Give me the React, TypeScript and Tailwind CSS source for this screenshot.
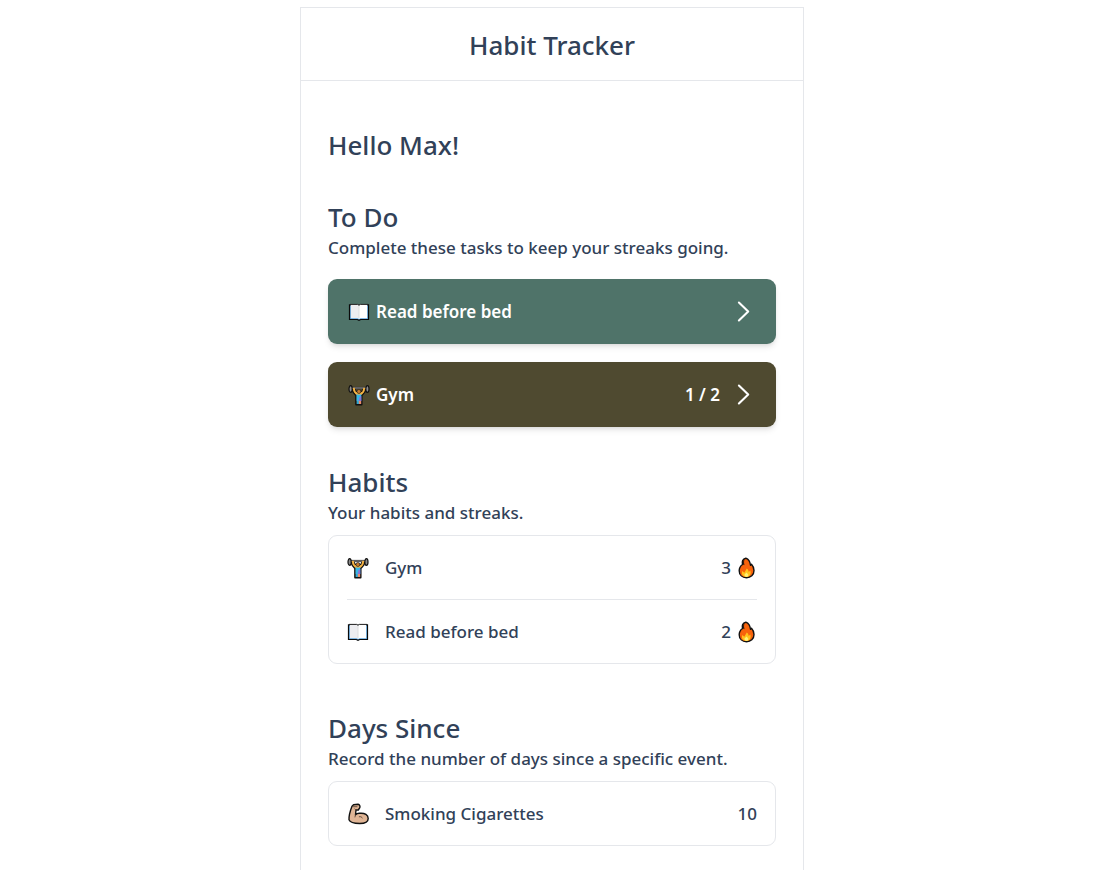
import type { ReactNode } from "react";

function BookIcon() {
  return (
    <svg viewBox="0 0 22 22" className="size-[22px] shrink-0" aria-hidden="true">
      <path d="M1.500 3.800H9.600L11 4.500 12.400 3.800H20.500V18.500H12.700L11 19.300 9.300 18.500H1.500Z" fill="#5aa5e0" stroke="#0a0a0a" strokeWidth="1.200" />
      <path d="M2.800 3.200H9.500L11 4.200V17.900L9.500 17.300H2.800Z" fill="#ededf0" />
      <path d="M19.200 3.200H12.500L11 4.200V17.900L12.500 17.300H19.200Z" fill="#fff" />
      <path d="M2 3.400H9.600L11 4.300 12.400 3.400H20" fill="none" stroke="#222" strokeWidth="1" />
      <path d="M11 4.800V17" stroke="#dadada" strokeWidth=".9" />
    </svg>
  );
}

function LifterIcon() {
  return (
    <svg viewBox="0 0 22 22" className="size-[22px] shrink-0" aria-hidden="true">
      <path d="M4 5L5.200 8 8 11.500V20.600H13.700V11.500L16.700 8 17.900 5 15.300 4.800 14.200 7.500H7.800L6.700 4.800Z" fill="#f5b342" stroke="#111" strokeWidth="1.700" strokeLinejoin="round" />
      <path d="M3 4H19" stroke="#222" strokeWidth="2.200" />
      <path d="M3 4H19" stroke="#aaa" strokeWidth=".9" />
      <circle cx="10.900" cy="7.500" r="2" fill="#c87a2c" stroke="#222" strokeWidth=".7" />
      <ellipse cx="2.600" cy="5" rx="1.600" ry="3.300" fill="#8c8c8c" stroke="#111" strokeWidth="1.200" />
      <ellipse cx="19.400" cy="5" rx="1.600" ry="3.300" fill="#8c8c8c" stroke="#111" strokeWidth="1.200" />
      <path d="M4.700 4L6.700 3.800 7.500 7.200 9.300 9.200 8.300 10.900 5.800 8ZM17.300 4L15.300 3.800 14.500 7.200 12.500 9.200 13.500 10.900 16.200 8Z" fill="#f5b342" />
      <path d="M8.500 10.200L11 10.800 13.300 10.200V17H8.500Z" fill="#35b8e8" />
      <path d="M11.500 13L13.300 12V17H10.500Z" fill="#8c73d2" />
      <path d="M10.800 17H13.200V20H10.800Z" fill="#e88b6c" />
      <path d="M8.700 17H10.800V20H8.700Z" fill="#2aa7d8" />
    </svg>
  );
}

function FlameIcon() {
  return (
    <svg viewBox="0 0 22 22" className="size-[22px] shrink-0" aria-hidden="true">
      <path d="M10.800 1.200C7.500 1.800 6.800 5 7.500 7.500 5.300 9 4.200 11 4.200 13.700 4.200 18 7.300 20.700 11.500 20.700S19 18 19 13.500C19 10.500 17.900 8.700 16.500 7.200L15.500 8.300C15.200 5.300 13.900 2.300 10.800 1.200Z" fill="#f7630c" stroke="#111" strokeWidth="1.400" strokeLinejoin="round" />
      <path d="M9 3.500C8.300 5 8.700 6.500 9.200 7.800L8 7C7.700 5.500 8.200 4.300 9 3.500Z" fill="#111" stroke="#111" strokeWidth=".5" />
      <path d="M7.300 14L9.300 15.700 11.800 11.500C13.200 12.500 13.500 13.700 13.700 15L15.300 13.500C16.500 17 14.800 19.900 11.500 19.900S6.100 17.500 7.300 14Z" fill="#ffc21c" />
      <path d="M9.500 17.500L11.600 15.500 13.300 17.700C13.300 19.200 12.600 19.900 11.500 19.900S9.400 18.900 9.500 17.500Z" fill="#fff176" />
    </svg>
  );
}

function BicepsIcon() {
  return (
    <svg viewBox="0 0 22 22" className="size-[22px] shrink-0" aria-hidden="true">
      <path d="M6.500 1.700L11 1.300C12.700 1.700 13.300 3.300 12.800 4.700L11.300 7 9 7 8.500 11.800C9.800 10.500 11.600 10 13.200 10.300 17.800 10 21.200 12 21.200 15.400 21.200 18.800 17.700 20.500 12.700 20.500 7.200 20.500 3 19.500 2 16.800 1.800 12.500 3.700 6.500 5 3.200Z" fill="#e0b595" stroke="#111" strokeWidth="1.400" strokeLinejoin="round" />
      <path d="M6.500 3.700H10M9 7L7.800 6M8.500 11.800L8 14M12.300 13.700C13.800 13.300 14.800 14 15.300 15" fill="none" stroke="#4c382d" strokeWidth=".8" strokeLinecap="round" />
    </svg>
  );
}

function Chevron() {
  return (
    <svg viewBox="0 0 27 27" className="size-[27px] shrink-0" fill="none" stroke="currentColor" strokeWidth="2.100" strokeLinecap="round" strokeLinejoin="round" aria-hidden="true">
      <path d="M8.900 4.500L18.200 13.500 8.900 22.500" />
    </svg>
  );
}

const headingClass = "mb-0.5 text-[26px] leading-[34px]";

function Section({ title, text, children }: { title: string; text: string; children: ReactNode }) {
  return (
    <section>
      <h2 className={headingClass}>{title}</h2>
      <p className="text-[17px] leading-6">{text}</p>
      {children}
    </section>
  );
}

function TodoCard({ icon, name, progress, color }: { icon: ReactNode; name: string; progress?: string; color: string }) {
  return (
    <button type="button" className={`flex h-[65px] w-full items-center rounded-[9px] pr-[19px] pl-5 text-left text-[17px] font-semibold text-white shadow-md ${color}`}>
      {icon}
      <span className="ml-1.5 grow">{name}</span>
      {progress && <span className="mr-2.5">{progress}</span>}
      <Chevron />
    </button>
  );
}

function Row({ icon, name, children }: { icon: ReactNode; name: string; children: ReactNode }) {
  return (
    <li className="box-content flex h-[63px] items-center">
      {icon}
      <span className="ml-4 grow">{name}</span>
      <span className="flex items-center gap-1">{children}</span>
    </li>
  );
}

const listClass = "mt-[10px] mb-[11px] divide-y divide-gray-200 rounded-[9px] border border-gray-200 px-[18px] text-[17px]";

export default function App() {
  return (
    <div className="flex min-h-screen justify-center bg-white pt-[7px] pr-[9px] font-['Noto_Sans',sans-serif] font-medium text-slate-700">
      <div className="w-full max-w-[504px] border border-b-0 border-gray-200">
        <header className="border-b border-gray-200 pt-[19px] pb-[17px] text-center">
          <h1 className="text-[26px] leading-9">Habit Tracker</h1>
        </header>
        <main className="flex flex-col gap-9 px-[27px] pt-[47px] pb-6">
          <h2 className={headingClass}>Hello Max!</h2>
          <Section title="To Do" text="Complete these tasks to keep your streaks going.">
            <div className="mt-[19px] mb-0.5 flex flex-col gap-[18px]">
              <TodoCard icon={<BookIcon />} name="Read before bed" color="bg-[#4f7369]" />
              <TodoCard icon={<LifterIcon />} name="Gym" progress="1 / 2" color="bg-[#4f4a30]" />
            </div>
          </Section>
          <Section title="Habits" text="Your habits and streaks.">
            <ul className={listClass}>
              <Row icon={<LifterIcon />} name="Gym">3 <FlameIcon /></Row>
              <Row icon={<BookIcon />} name="Read before bed">2 <FlameIcon /></Row>
            </ul>
          </Section>
          <Section title="Days Since" text="Record the number of days since a specific event.">
            <ul className={listClass}>
              <Row icon={<BicepsIcon />} name="Smoking Cigarettes">10</Row>
            </ul>
          </Section>
        </main>
      </div>
    </div>
  );
}
